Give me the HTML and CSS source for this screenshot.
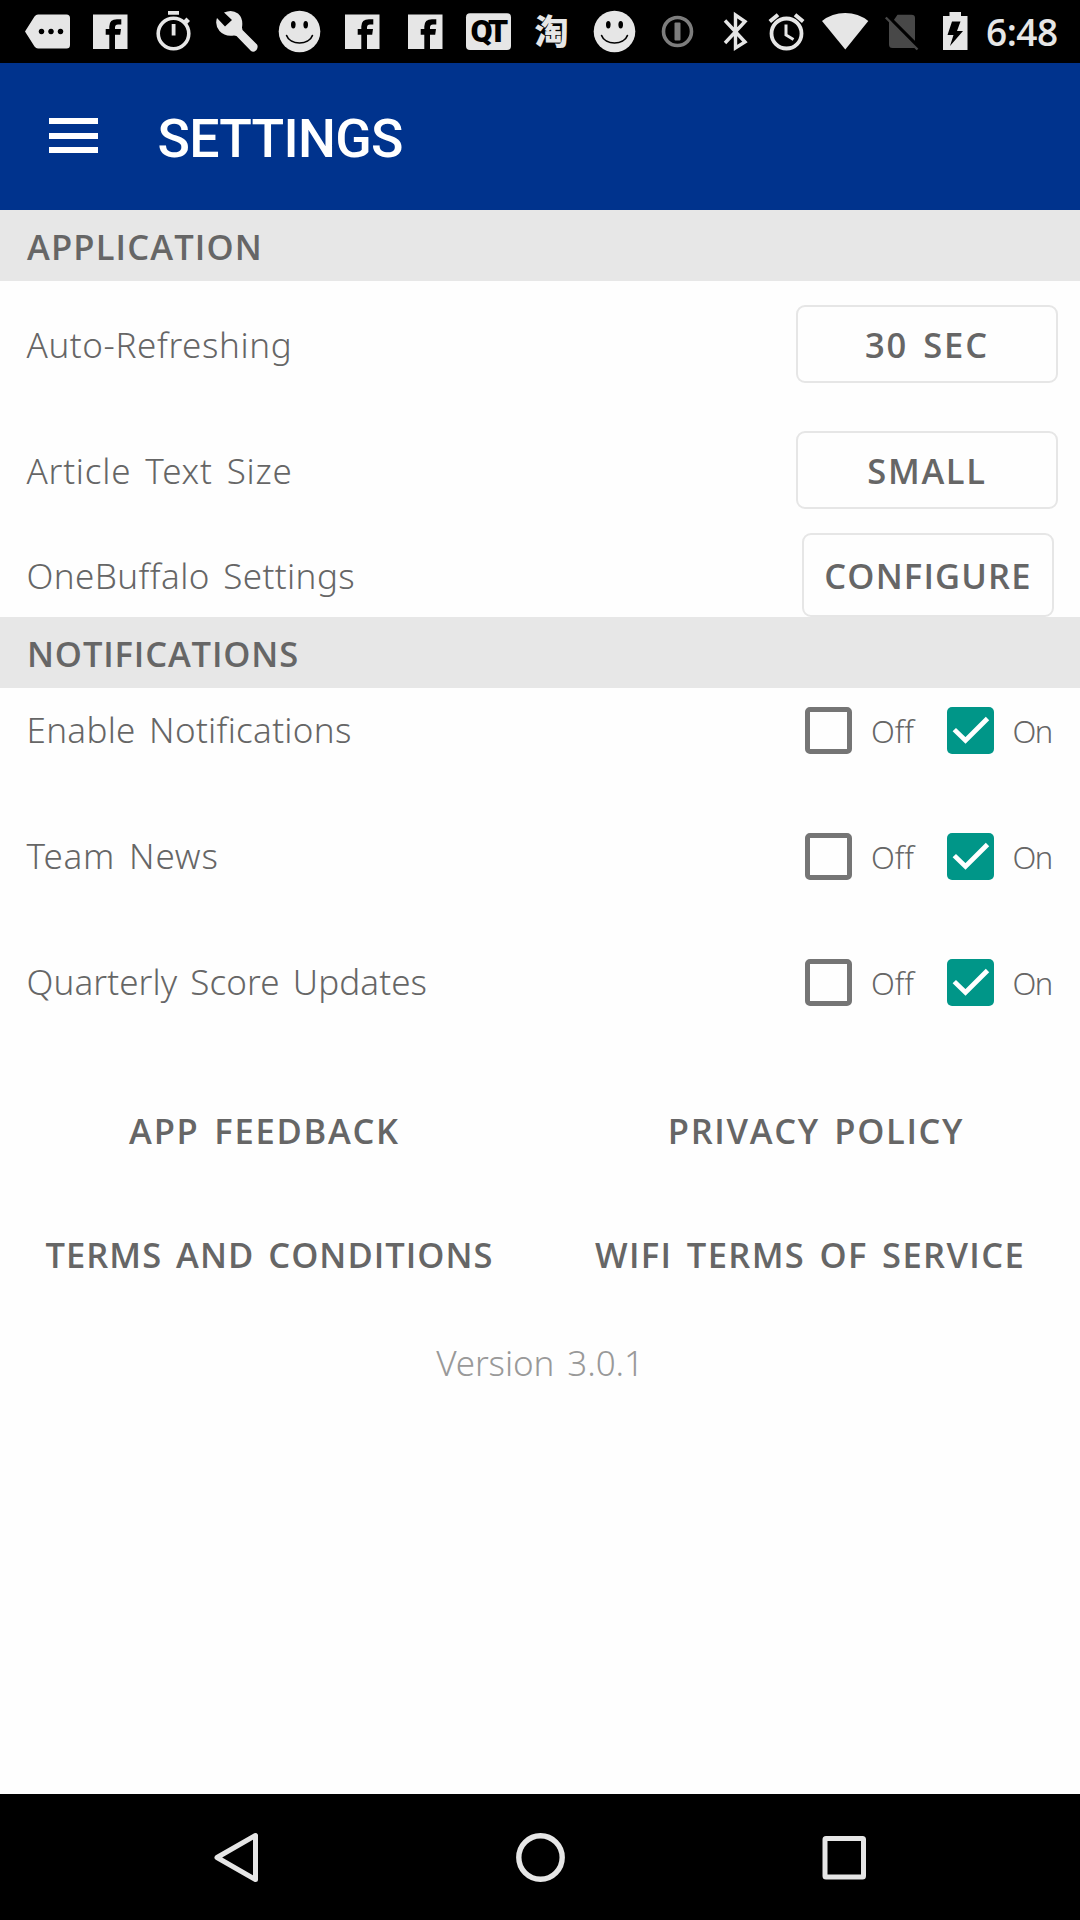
FILE: index.html
```html
<!DOCTYPE html>
<html lang="en">
<head>
<meta charset="utf-8">
<title>Settings</title>
<link rel="stylesheet" href="styles.css">
</head>
<body>
<svg class="defs" width="0" height="0" aria-hidden="true">
  <symbol id="facebook" viewBox="0 0 63 63">
    <path fill-rule="evenodd" d="M14 14.5H48.5V49H36V34.7H41.2L42 29H36V27.5Q36 24.5 39 24.5H42.3V19.2H38Q30.3 19.2 30.3 26.5V29H26.7V34.7H30.3V49H14Z"/>
  </symbol>
  <symbol id="smiley" viewBox="0 0 63 63">
    <circle cx="31.5" cy="31.5" r="20.8"/>
    <ellipse cx="25.3" cy="24.8" rx="2.3" ry="3.7" fill="#000"/>
    <ellipse cx="37.7" cy="24.8" rx="2.3" ry="3.7" fill="#000"/>
    <path d="M18.6 35.5C22 45.5 41 45.5 44.4 35.5" fill="none" stroke="#000" stroke-width="1.7" stroke-linecap="round"/>
  </symbol>
  <symbol id="check" viewBox="0 0 47 47">
    <path d="M7.3 22.6L18.5 33.5L40.5 11.5" fill="none" stroke="#fff" stroke-width="4.8"/>
  </symbol>
</svg>

<header class="status">
  <div class="status__notices">
    <svg viewBox="0 0 63 63"><path fill-rule="evenodd" d="M22 14.5H50.5Q54 14.5 54 18V45Q54 48.5 50.5 48.5H22Q20 48.5 18.5 46.5L9 31.5L18.5 16.5Q20 14.5 22 14.5ZM25.5 28.700a2.800 2.800 0 1 0 .01 0ZM35 28.700a2.800 2.800 0 1 0 .01 0ZM44.500 28.700a2.800 2.800 0 1 0 .01 0Z"/></svg>
    <svg><use href="#facebook"/></svg>
    <svg viewBox="0 0 63 63"><circle cx="31.500" cy="33.500" r="15.300" fill="none" stroke="#e6e6e6" stroke-width="3.600"/><path d="M26 11h11v3.800H26zM29.700 24h3.800v11.500h-3.800zM41.500 20.500l3-3 3.500 3.500-3 3z"/></svg>
    <svg viewBox="0 0 63 63"><path d="M19 12.500Q27 9 33 13.500Q38.500 18.500 37 27.500L37.500 30L52 44.500Q53.500 47 51.500 50Q48.500 53 46 51L31.500 36L29 35.500Q20 37 14.500 31Q9.500 25 12 18L20 26.500L27 20Z"/></svg>
    <svg><use href="#smiley"/></svg>
    <svg><use href="#facebook"/></svg>
    <svg><use href="#facebook"/></svg>
    <svg viewBox="0 0 63 63"><rect x="9" y="13.300" width="45" height="36.700" rx="4"/><text class="qt" x="13.500" y="42">QT</text></svg>
    <svg viewBox="0 0 63 63"><text class="taobao" x="14.500" y="44">淘</text></svg>
    <svg><use href="#smiley"/></svg>
    <svg class="muted" viewBox="0 0 63 63"><circle cx="31.500" cy="31.500" r="14" fill="none" stroke="#7d7d7d" stroke-width="3.600"/><rect x="28.500" y="22.500" width="6" height="18" rx="1"/></svg>
  </div>
  <svg class="bluetooth" viewBox="709 0 52 63"><path d="M725 20.500L745 42L735.500 48V15L745 21.500L725 43" fill="none" stroke="#e6e6e6" stroke-width="3.400"/></svg>
  <svg class="alarm" viewBox="761 0 51 63"><circle cx="786.500" cy="33.500" r="15" fill="none" stroke="#e6e6e6" stroke-width="3.800"/><path d="M786 24.500V35L793.500 39.500" fill="none" stroke="#e6e6e6" stroke-width="3"/><path d="M769.800 21.500L778 14.800M803.200 21.500L795 14.800" fill="none" stroke="#e6e6e6" stroke-width="4"/></svg>
  <svg class="wifi" viewBox="812 0 66 63"><path d="M822 21Q832 13 845.200 13T868.300 21L845.300 49.500Z"/></svg>
  <svg class="sim" viewBox="878 0 48 63"><path d="M897.500 14.700H911.500Q915 14.700 915 18V42L893.500 20.500ZM889 21L913.500 46L915 48H892.500Q889 48 889 44.500Z"/><path d="M885.800 17.500L917.500 49.500" fill="none" stroke="#484848" stroke-width="2.400"/><path d="M892 19.500L918 45.500" fill="none" stroke="#000" stroke-width="2.400"/></svg>
  <svg class="battery" viewBox="926 0 58 63"><path fill-rule="evenodd" d="M949.500 12H961V16H967.500V50H943V16H949.500ZM952 21.500L947.500 35H953.500L950 46L963 31H957L960.500 21.500Z"/></svg>
  <time class="clock">6:48</time>
</header>

<nav class="appbar">
  <button class="menu" aria-label="Menu"><span></span><span></span><span></span></button>
  <h1 class="appbar__title">SETTINGS</h1>
</nav>

<main class="content">
  <h2 class="section t-application">APPLICATION</h2>
  <div class="row row--first"><span class="label t-auto">Auto-Refreshing</span><button class="btn t-sec">30 SEC</button></div>
  <div class="row row--second"><span class="label t-article">Article Text Size</span><button class="btn t-small">SMALL</button></div>
  <div class="row row--third"><span class="label t-one">OneBuffalo Settings</span><button class="btn btn--configure t-configure">CONFIGURE</button></div>

  <h2 class="section t-notifications">NOTIFICATIONS</h2>
  <div class="toggles">
    <div class="row"><span class="label t-enable">Enable Notifications</span>
      <div class="choice"><span class="box"></span><span class="choice__off">Off</span><svg class="box box--on"><use href="#check"/></svg><span class="choice__on">On</span></div></div>
    <div class="row"><span class="label t-team">Team News</span>
      <div class="choice"><span class="box"></span><span class="choice__off">Off</span><svg class="box box--on"><use href="#check"/></svg><span class="choice__on">On</span></div></div>
    <div class="row"><span class="label t-quarterly">Quarterly Score Updates</span>
      <div class="choice"><span class="box"></span><span class="choice__off">Off</span><svg class="box box--on"><use href="#check"/></svg><span class="choice__on">On</span></div></div>
  </div>

  <div class="links">
    <div class="links__row links__row--top"><a class="t-feedback">APP FEEDBACK</a><a class="t-privacy">PRIVACY POLICY</a></div>
    <div class="links__row links__row--bottom"><a class="t-terms">TERMS AND CONDITIONS</a><a class="t-wifi">WIFI TERMS OF SERVICE</a></div>
  </div>
  <p class="version">Version 3.0.1</p>
</main>

<footer class="navbar">
  <svg viewBox="0 0 63 63"><path d="M50.500 9.500V53.500L12 31.500Z" fill="none" stroke="#e6e6e6" stroke-width="5" stroke-linejoin="round"/></svg>
  <svg viewBox="0 0 63 63"><circle cx="31.500" cy="31.500" r="21.700" fill="none" stroke="#e6e6e6" stroke-width="5.400"/></svg>
  <svg viewBox="0 0 63 63"><rect x="13" y="12.500" width="38.500" height="38.500" rx="1" fill="none" stroke="#e6e6e6" stroke-width="5"/></svg>
</footer>
</body>
</html>
```
FILE: styles.css
```css
* { box-sizing: border-box; margin: 0; padding: 0; }

body {
  width: 1080px;
  height: 1920px;
  display: flex;
  flex-direction: column;
  background: #fefefe;
  color: #666;
  font-family: "Noto Sans", "Open Sans", sans-serif;
  overflow: hidden;
}

.defs { position: absolute; }
button { border: 0; background: none; color: inherit; font: inherit; }
svg { display: block; flex: none; }

/* Status bar */
.status { height: 63px; display: flex; background: #000; color: #e6e6e6; }
.status svg { height: 63px; fill: #e6e6e6; }
.status__notices { display: flex; margin-left: 16px; }
.status__notices svg { width: 63px; }
.status .muted { fill: #7d7d7d; }
.status .bluetooth { width: 52px; }
.status .alarm { width: 51px; }
.status .wifi { width: 66px; }
.status .sim { width: 48px; fill: #484848; }
.status .battery { width: 58px; }
.qt { font: 900 32px Roboto, sans-serif; letter-spacing: -4px; fill: #000; }
.taobao { font: 900 34px "Noto Sans CJK SC", sans-serif; }
.clock { font: 600 37px/63px "Open Sans", sans-serif; letter-spacing: -0.5px; margin-left: 2px; }

/* App bar */
.appbar { height: 147px; display: flex; align-items: center; gap: 60px; padding-left: 49px; background: #00338d; color: #fff; }
.menu { width: 49px; display: flex; flex-direction: column; gap: 8.5px; margin-top: -2px; }
.menu span { height: 6px; background: #fff; }
.appbar__title { font: 500 53.5px/60px Roboto, sans-serif; letter-spacing: -0.7px; padding-top: 5px; margin-left: -0.5px; }

/* Settings list */
.content { flex: 1; line-height: 50px; }
.section { height: 71px; padding: 1px 0 0 27px; background: #e7e7e7; font: 600 34.5px/71px "Open Sans", sans-serif; }
.row { display: flex; align-items: center; justify-content: space-between; padding-left: 26.5px; }
.row--first { height: 125px; padding-right: 22px; }
.row--second { height: 127px; padding-right: 22px; }
.row--third { height: 84px; padding-right: 26px; }
.label { font-size: 35px; font-weight: 350; word-spacing: 4px; padding-top: 2px; }
.btn { width: 262px; height: 78px; padding-top: 3px; border: 2px solid #e6e6e6; border-radius: 9px; font: 600 34.5px/1 "Open Sans", sans-serif; word-spacing: 4px; }
.btn--configure { width: 252px; height: 84px; }

.toggles { display: flex; flex-direction: column; gap: 41px; }
.toggles .row { height: 85px; padding-right: 26px; }
.toggles .label { padding: 0 0 2px; }
.choice { display: flex; align-items: center; width: 249px; font-size: 31px; font-weight: 350; }
.box { width: 47px; height: 47px; border: 5px solid #757575; border-radius: 5px; }
.box--on { border: 0; background: #009688; }
.choice__off { width: 95px; padding-left: 19px; }
.choice__on { padding-left: 18.5px; letter-spacing: -1.5px; }

.links { padding-top: 44px; font: 600 34.5px/124px "Open Sans", sans-serif; word-spacing: 4px; }
.links__row { display: grid; height: 124px; text-align: center; }
.links__row--top { grid-template-columns: 529px 528px; column-gap: 23px; }
.links__row--bottom { grid-template-columns: 539px 542px; }
.version { margin: 21px 0 0; text-align: center; font-size: 35px; font-weight: 350; color: #999; letter-spacing: -0.1px; word-spacing: 4px; }

/* Tracking per caption */
.t-application { letter-spacing: 1.15px; }
.t-notifications { letter-spacing: 0.85px; }
.t-auto { letter-spacing: 0.6px; }
.t-article { letter-spacing: 0.8px; }
.t-one { letter-spacing: 0.4px; }
.t-enable { letter-spacing: 0.3px; }
.t-team { letter-spacing: 0.8px; }
.t-quarterly { letter-spacing: 0.09px; }
.t-sec { letter-spacing: 1.93px; }
.t-small { letter-spacing: 1.67px; }
.t-configure { letter-spacing: 1.17px; }
.t-feedback { letter-spacing: 1.75px; }
.t-privacy { letter-spacing: 1.65px; }
.t-terms { letter-spacing: 1.02px; }
.t-wifi { letter-spacing: 1.37px; }

/* System navigation */
.navbar { height: 126px; display: flex; align-items: center; justify-content: center; gap: 240.5px; background: #000; }
.navbar svg { width: 63px; height: 63px; }
```
